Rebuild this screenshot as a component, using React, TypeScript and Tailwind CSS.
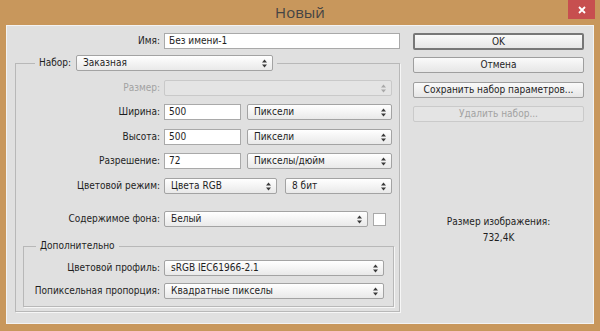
import React from "react";

const font = { fontFamily: '"DejaVu Sans Condensed", "Liberation Sans", Arial, sans-serif' };

function Arrows({ disabled }: { disabled?: boolean }) {
  const c = disabled ? "#a8a8a8" : "#3a3a3a";
  return (
    <svg width="5" height="9" viewBox="0 0 5 9" className="ml-auto shrink-0">
      <path d="M0 3.5 L2.5 0.5 L5 3.5 Z" fill={c} />
      <path d="M0 5.5 L2.5 8.5 L5 5.5 Z" fill={c} />
    </svg>
  );
}

function Select({ w, value, disabled }: { w: string; value?: string; disabled?: boolean }) {
  return (
    <div
      className={`${w} h-[16px] flex items-center pl-[6px] pr-[5px] rounded-[2px] border ${
        disabled
          ? "border-[#c9c9c9] bg-[#e4e4e4]"
          : "border-[#a3a3a3] bg-gradient-to-b from-[#ffffff] to-[#e9e9e9]"
      } text-[10px] leading-[14px] text-[#1e1e1e]`}
    >
      <span className="whitespace-nowrap">{value}</span>
      <Arrows disabled={disabled} />
    </div>
  );
}

function Input({ w, value }: { w: string; value: string }) {
  return (
    <div className={`${w} h-[16px] flex items-center px-[4px] bg-white border border-[#a9a9a9] text-[10px] leading-[14px] text-[#1e1e1e]`}>
      {value}
    </div>
  );
}

function Label({ w, text, disabled }: { w: string; text: string; disabled?: boolean }) {
  return (
    <div className={`${w} text-right whitespace-nowrap text-[10px] leading-[16px] ${disabled ? "text-[#a2a2a2]" : "text-[#1e1e1e]"}`}>
      {text}
    </div>
  );
}

function Button({ text, primary, disabled, mt }: { text: string; primary?: boolean; disabled?: boolean; mt: string }) {
  return (
    <div
      className={`${mt} w-[171px] flex items-center justify-center whitespace-nowrap rounded-[2px] text-[10px] leading-[14px] ${
        primary
          ? "h-[17px] border-2 border-[#777777] bg-gradient-to-b from-[#fafafa] to-[#e6e6e6] text-[#1e1e1e]"
          : disabled
          ? "h-[16px] border border-[#cacaca] bg-[#e4e4e4] text-[#a2a2a2]"
          : "h-[16px] border border-[#9e9e9e] bg-gradient-to-b from-[#fafafa] to-[#e6e6e6] text-[#1e1e1e]"
      }`}
    >
      {text}
    </div>
  );
}

export default function App() {
  return (
    <div className="w-[600px] h-[331px] bg-[#c8975c] flex flex-col overflow-hidden" style={font}>
      {/* Title bar */}
      <div className="h-[25px] shrink-0 flex items-start relative">
        <div className="flex-1 text-center text-[15px] leading-[24px] text-[#444444]" style={{ fontFamily: '"Open Sans", "Liberation Sans", sans-serif' }}>
          Новый
        </div>
        <div className="absolute right-[5px] top-0 w-[27px] h-[19px] bg-[#c74f4f] flex items-center justify-center">
          <svg width="8" height="8" viewBox="0 0 8 8">
            <path d="M1 1 L7 7 M7 1 L1 7" stroke="#ffffff" strokeWidth="1.8" />
          </svg>
        </div>
      </div>

      {/* Content */}
      <div className="mx-[6px] h-[299px] bg-[#e0e0e0] border border-[#f3f3f3] flex">
        {/* Left column */}
        <div className="pl-[8px] pt-[7px] w-[394px] flex flex-col">
          <div className="flex items-center">
            <Label w="w-[145px]" text="Имя:" />
            <div className="w-[4px]" />
            <Input w="w-[236px]" value="Без имени-1" />
          </div>

          <fieldset className="mt-[6px] w-[385px] h-[257px] border border-[#b8b8b8] shadow-[1px_1px_0_#f6f6f6] flex flex-col">
            <legend className="ml-[19px] px-[4px] flex items-center">
              <span className="text-[10px] leading-[16px] text-[#1e1e1e] mr-[5px]">Набор:</span>
              <Select w="w-[197px]" value="Заказная" />
            </legend>

            <div className="flex items-center mt-[9px]">
              <Label w="w-[144px]" text="Размер:" disabled />
              <div className="w-[4px]" />
              <Select w="w-[228px]" disabled />
            </div>
            <div className="flex items-center mt-[8px]">
              <Label w="w-[144px]" text="Ширина:" />
              <div className="w-[4px]" />
              <Input w="w-[77px]" value="500" />
              <div className="w-[6px]" />
              <Select w="w-[145px]" value="Пиксели" />
            </div>
            <div className="flex items-center mt-[9px]">
              <Label w="w-[144px]" text="Высота:" />
              <div className="w-[4px]" />
              <Input w="w-[77px]" value="500" />
              <div className="w-[6px]" />
              <Select w="w-[145px]" value="Пиксели" />
            </div>
            <div className="flex items-center mt-[8px]">
              <Label w="w-[144px]" text="Разрешение:" />
              <div className="w-[4px]" />
              <Input w="w-[77px]" value="72" />
              <div className="w-[6px]" />
              <Select w="w-[145px]" value="Пикселы/дюйм" />
            </div>
            <div className="flex items-center mt-[9px]">
              <Label w="w-[144px]" text="Цветовой режим:" />
              <div className="w-[4px]" />
              <Select w="w-[113px]" value="Цвета RGB" />
              <div className="w-[8px]" />
              <Select w="w-[107px]" value="8 бит" />
            </div>
            <div className="flex items-center mt-[17px]">
              <Label w="w-[144px]" text="Содержимое фона:" />
              <div className="w-[4px]" />
              <Select w="w-[204px]" value="Белый" />
              <div className="w-[5px]" />
              <div className="w-[13px] h-[13px] bg-white border border-[#a9a9a9]" />
            </div>

            <fieldset className="mt-[12px] ml-[7px] w-[371px] h-[68px] border border-[#b8b8b8] shadow-[1px_1px_0_#f6f6f6] flex flex-col">
              <legend className="ml-[12px] px-[4px] text-[10px] leading-[14px] text-[#1e1e1e]">Дополнительно</legend>
              <div className="flex items-center mt-[7px]">
                <Label w="w-[136px]" text="Цветовой профиль:" />
                <div className="w-[4px]" />
                <Select w="w-[220px]" value="sRGB IEC61966-2.1" />
              </div>
              <div className="flex items-center mt-[7px]">
                <Label w="w-[136px]" text="Попиксельная пропорция:" />
                <div className="w-[4px]" />
                <Select w="w-[220px]" value="Квадратные пикселы" />
              </div>
            </fieldset>
          </fieldset>
        </div>

        {/* Right column */}
        <div className="ml-[12px] pt-[7px] flex flex-col">
          <Button text="OK" primary mt="mt-0" />
          <Button text="Отмена" mt="mt-[7px]" />
          <Button text="Сохранить набор параметров..." mt="mt-[9px]" />
          <Button text="Удалить набор..." disabled mt="mt-[8px]" />
          <div className="mt-[92px] text-center text-[10px] leading-[16px] text-[#1e1e1e]">Размер изображения:</div>
          <div className="text-center text-[10px] leading-[16px] text-[#1e1e1e]">732,4K</div>
        </div>
      </div>
    </div>
  );
}
